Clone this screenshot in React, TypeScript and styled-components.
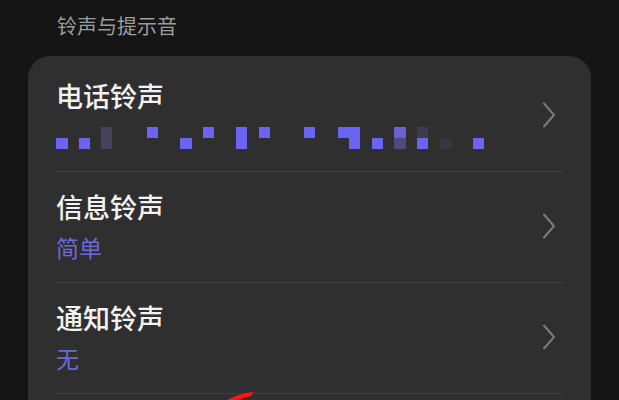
import styled, { createGlobalStyle } from 'styled-components'

const GlobalStyle = createGlobalStyle`
  html, body {
    margin: 0;
    padding: 0;
    background: #151515;
  }
  body {
    font-family: "Noto Sans CJK SC", "Noto Sans", sans-serif;
    overflow: hidden;
  }
`

const Page = styled.div`
  position: relative;
  width: 619px;
  height: 400px;
  overflow: hidden;
  background: #151515;
  padding-top: 12px;
  box-sizing: border-box;
`

const SectionTitle = styled.div`
  color: #9c9c9c;
  font-size: 20px;
  line-height: 28px;
  padding-left: 57px;
  margin-bottom: 16px;
`

const Card = styled.div`
  margin: 0 28px;
  padding: 5px 28px 0;
  background: #2f2f2f;
  border-radius: 22px;
`

const Row = styled.div`
  display: flex;
  align-items: center;
  padding: 17px 0 20px;
  border-bottom: 1px solid #414141;
`

const Texts = styled.div`
  flex: 1;
  display: flex;
  flex-direction: column;
`

const Title = styled.div`
  color: #f2f2f2;
  font-size: 27px;
  font-weight: 500;
  line-height: 36px;
`

const Sub = styled.div`
  margin-top: 7px;
  color: #6d68dc;
  font-size: 23px;
  line-height: 30px;
  height: 30px;
`

const Mosaic = styled.svg`
  display: block;
  margin: 13px 0 2px;
`

const Chevron = styled.svg`
  flex-shrink: 0;
  margin-right: 7px;
`

const Annotation = styled.svg`
  position: absolute;
  left: 222px;
  top: 388px;
`

const BRIGHT = '#6b64f3'

const cells: [number, number, number, number, string][] = [
  [0, 11, 12, 11, BRIGHT],
  [23, 11, 11, 11, BRIGHT],
  [45, 0, 11, 22, '#47435f'],
  [91, 0, 11, 11, BRIGHT],
  [124, 11, 12, 11, BRIGHT],
  [147, 0, 11, 11, BRIGHT],
  [180, 0, 11, 22, BRIGHT],
  [203, 0, 11, 11, BRIGHT],
  [248, 0, 11, 11, BRIGHT],
  [282, 0, 22, 11, BRIGHT],
  [293, 11, 11, 11, BRIGHT],
  [316, 11, 11, 11, BRIGHT],
  [338, 0, 12, 11, '#6a62d2'],
  [338, 11, 12, 11, '#4e4a7a'],
  [361, 0, 11, 11, '#3d3b4b'],
  [361, 11, 11, 11, BRIGHT],
  [384, 11, 12, 11, '#38363f'],
  [417, 11, 11, 11, BRIGHT],
]

const ChevronIcon = () => (
  <Chevron width="14" height="26" viewBox="0 0 14 26">
    <path d="M2 1.5 L12 13 L2 24.5" fill="none" stroke="#7b7b7b" strokeWidth="2" strokeLinecap="round" strokeLinejoin="round" />
  </Chevron>
)

type Item = { title: string; sub?: string; mosaic?: boolean }

const items: Item[] = [
  { title: '电话铃声', mosaic: true },
  { title: '信息铃声', sub: '简单' },
  { title: '通知铃声', sub: '无' },
]

export default function App() {
  return (
    <>
      <GlobalStyle />
      <Page>
        <SectionTitle>铃声与提示音</SectionTitle>
        <Card>
          {items.map((item) => (
            <Row key={item.title}>
              <Texts>
                <Title>{item.title}</Title>
                {item.mosaic ? (
                  <Mosaic width="430" height="22" viewBox="0 0 430 22">
                    {cells.map(([x, y, w, h, c], i) => (
                      <rect key={i} x={x} y={y} width={w} height={h} fill={c} />
                    ))}
                  </Mosaic>
                ) : (
                  <Sub>{item.sub}</Sub>
                )}
              </Texts>
              <ChevronIcon />
            </Row>
          ))}
          <Row>
            <Texts>
              <Title>&nbsp;</Title>
            </Texts>
          </Row>
        </Card>
        <Annotation width="36" height="14" viewBox="0 0 36 14">
          <path d="M3 13 Q14 7 27 4.5 L31 4 L29 8 Q18 11 9 14 Z" fill="#ff1414" />
        </Annotation>
      </Page>
    </>
  )
}
